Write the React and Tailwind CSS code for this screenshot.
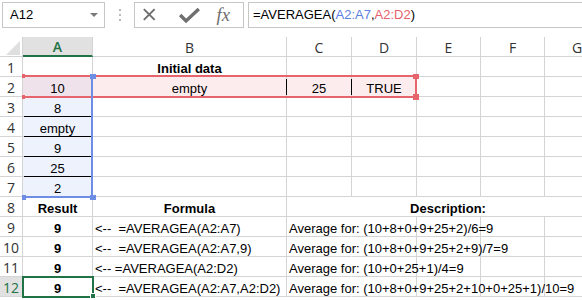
import React from 'react';

const font = { fontFamily: '"Liberation Sans", Arial, sans-serif' };
const uiFont = { fontFamily: '"Open Sans", sans-serif' };

const cols = ['A', 'B', 'C', 'D', 'E', 'F', 'G'];

const rows = [
    { n: 1, cells: [null, { t: 'Initial data', b: true, c: true }] },
    { n: 2, cells: [{ t: '10', c: true }, { t: 'empty', c: true }, { t: '25', c: true }, { t: 'TRUE', c: true }] },
    { n: 3, cells: [{ t: '8', c: true }] },
    { n: 4, cells: [{ t: 'empty', c: true }] },
    { n: 5, cells: [{ t: '9', c: true }] },
    { n: 6, cells: [{ t: '25', c: true }] },
    { n: 7, cells: [{ t: '2', c: true }] },
    { n: 8, cells: [{ t: 'Result', b: true, c: true }, { t: 'Formula', b: true, c: true }, { t: 'Description:', b: true, c: true, span: 5 }] },
    { n: 9, cells: [{ t: '9', b: true, c: true }, { t: '<--  =AVERAGEA(A2:A7)' }, { t: 'Average for: (10+8+0+9+25+2)/6=9', over: true }] },
    { n: 10, cells: [{ t: '9', b: true, c: true }, { t: '<--  =AVERAGEA(A2:A7,9)' }, { t: 'Average for: (10+8+0+9+25+2+9)/7=9', over: true }] },
    { n: 11, cells: [{ t: '9', b: true, c: true }, { t: '<-- =AVERAGEA(A2:D2)' }, { t: 'Average for: (10+0+25+1)/4=9', over: true }] },
    { n: 12, cells: [{ t: '9', b: true, c: true }, { t: '<--  =AVERAGEA(A2:A7,A2:D2)' }, { t: 'Average for: (10+8+0+9+25+2+10+0+25+1)/10=9', over: true }] },
];

const Cell = ({ row, col, cell }) => {
    let bg = 'bg-white';
    if (row === 2 && col === 0) bg = 'bg-[#efe2ea]';
    else if (row >= 3 && row <= 7 && col === 0) bg = 'bg-[#edf2fc]';
    else if (row === 2 && col <= 3) bg = 'bg-[#fdeced]';
    const rightBorder = cell && cell.over ? 'border-r-transparent' : 'border-r-[#d4d4d4]';
    const span = cell && cell.span === 5 ? 'col-span-5' : '';
    return (
        <div
            className={`relative h-5 border-r border-b border-b-[#d4d4d4] ${rightBorder} ${bg} ${span} flex items-end pb-[1px] leading-none ${cell && cell.c ? 'justify-center' : 'justify-start pl-[2px]'} text-[13px] text-black whitespace-pre ${cell && cell.b ? 'font-bold' : ''}`}
            style={{ zIndex: cell && cell.over ? 2 : 1 }}
        >
            {cell && cell.t}
            {row >= 3 && row <= 6 && col === 0 && (
                <div className="absolute left-[1px] right-[1px] bottom-[-1px] h-px bg-black" />
            )}
            {row === 2 && (col === 1 || col === 2) && (
                <div className="absolute right-[-1px] top-[2px] bottom-[1px] w-px bg-black" />
            )}
        </div>
    );
};

const Toolbar = () => (
    <div className="h-[37px] flex items-start pt-[2px] bg-white">
        <div className="ml-[2px] w-[103px] h-[26px] border border-[#c6c6c6] flex items-center justify-between pl-[7px] pr-[6px]">
            <span className="text-[13px] text-black" style={font}>A12</span>
            <span className="w-0 h-0 border-l-[4px] border-r-[4px] border-t-[4px] border-l-transparent border-r-transparent border-t-[#7a7a7a]" />
        </div>
        <div className="w-[29px] h-[26px] flex flex-col items-center justify-center gap-[3px]">
            <span className="w-[2px] h-[2px] bg-[#b8b8b8]" />
            <span className="w-[2px] h-[2px] bg-[#b8b8b8]" />
            <span className="w-[2px] h-[2px] bg-[#b8b8b8]" />
        </div>
        <div className="w-[110px] h-[26px] border border-[#c6c6c6] flex items-center">
            <svg width="110" height="24" viewBox="0 0 110 24">
                <path d="M9 6 L20 17 M20 6 L9 17" stroke="#6f6f6f" strokeWidth="2" fill="none" />
                <path d="M46 12 L52 18 L65 6" stroke="#6f6f6f" strokeWidth="3.5" fill="none" strokeLinejoin="miter" />
                <text x="83" y="18" fontFamily='"Liberation Serif", serif' fontStyle="italic" fontSize="19" fill="#6f6f6f">fx</text>
            </svg>
        </div>
        <div className="ml-[4px] flex-1 h-[26px] border border-r-0 border-[#c6c6c6] flex items-center pl-[4px] text-[13px] text-black" style={font}>
            <span>=AVERAGEA(</span>
            <span className="text-[#5b7fe0]">A2:A7</span>
            <span>,</span>
            <span className="text-[#e5626a]">A2:D2</span>
            <span>)</span>
        </div>
    </div>
);

export default function App() {
    return (
        <div className="w-[582px] h-[300px] overflow-hidden bg-white" style={font}>
            <Toolbar />
            <div className="relative w-[610px] grid grid-cols-[23px_70px_194px_65px_65px_64px_64px_65px]">
                {/* header row */}
                <div className="relative h-5 border-r border-b border-[#d4d4d4] bg-white">
                    <svg className="absolute left-[6px] top-[4px]" width="14" height="14" viewBox="0 0 14 14">
                        <polygon points="14,0 14,14 0,14" fill="#dfdfdf" />
                    </svg>
                </div>
                {cols.map((c, i) => (
                    <div
                        key={c}
                        className={`h-5 flex items-end pb-[1px] leading-none justify-center text-[14px] ${i === 0 ? 'bg-[#e1e1e1] text-[#217346] border-b-2 border-b-[#217346] font-semibold' : 'bg-white text-[#333] border-b border-b-[#d4d4d4]'} border-r border-r-[#d4d4d4]`}
                        style={uiFont}
                    >
                        {c}
                    </div>
                ))}
                {rows.map((r) => {
                    const out = [];
                    out.push(
                        <div
                            key={`h${r.n}`}
                            className={`h-5 border-r border-b border-[#d4d4d4] flex items-end pb-[1px] leading-none justify-center text-[14px] ${r.n === 12 ? 'bg-[#e1e1e1] text-[#217346]' : 'bg-white text-[#333]'}`}
                            style={uiFont}
                        >
                            {r.n}
                        </div>
                    );
                    let col = 0;
                    while (col < 7) {
                        const cell = r.cells[col];
                        out.push(<Cell key={`${r.n}-${col}`} row={r.n} col={col} cell={cell} />);
                        col += cell && cell.span ? cell.span : 1;
                    }
                    return out;
                })}

                {/* red range A2:D2 */}
                <div className="absolute left-[22px] top-[38px] w-[395px] h-[23px] border-t-2 border-b-2 border-r-2 border-[#e6646b] pointer-events-none z-10" />
                <div className="absolute left-[22px] top-[37px] w-[3px] h-[4px] bg-[#e6646b] z-10" />
                <div className="absolute left-[22px] top-[58px] w-[3px] h-[4px] bg-[#e6646b] z-10" />
                <div className="absolute left-[413px] top-[37px] w-[6px] h-[5px] bg-[#e6646b] z-10" />
                <div className="absolute left-[413px] top-[57px] w-[6px] h-[6px] bg-[#e6646b] z-10" />

                {/* blue range A2:A7 */}
                <div className="absolute left-[91px] top-[40px] w-[2px] h-[120px] bg-[#6e8ee6] z-10" />
                <div className="absolute left-[23px] top-[159px] w-[70px] h-[2px] bg-[#6e8ee6] z-10" />
                <div className="absolute left-[90px] top-[37px] w-[6px] h-[5px] bg-[#6e8ee6] z-10" />
                <div className="absolute left-[22px] top-[158px] w-[4px] h-[5px] bg-[#6e8ee6] z-10" />
                <div className="absolute left-[90px] top-[158px] w-[6px] h-[5px] bg-[#6e8ee6] z-10" />

                {/* active cell A12 */}
                <div className="absolute left-[22px] top-[239px] w-[72px] h-[22px] border-2 border-[#217346] z-10" />
                <div className="absolute left-[90px] top-[256px] w-[6px] h-[6px] bg-[#217346] border border-white z-10" />
            </div>
        </div>
    );
}
